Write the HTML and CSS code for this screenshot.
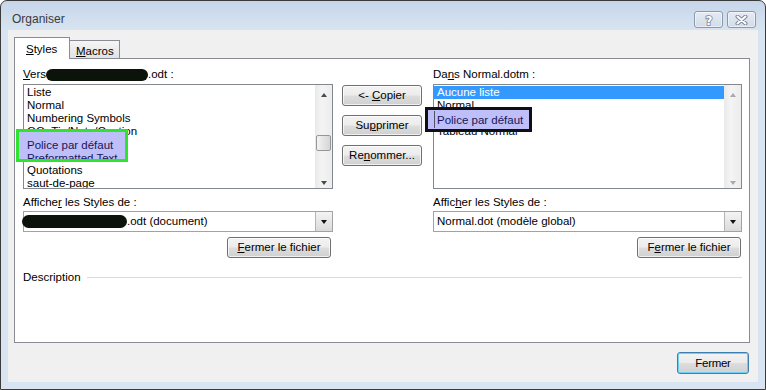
FILE: index.html
```html
<!DOCTYPE html>
<html lang="fr">
<head>
    <meta charset="UTF-8">
    <meta name="viewport" content="width=device-width, initial-scale=1.0">
    <title>Organiser</title>
    <link rel="stylesheet" href="styles.css">
</head>
<body>
    <div class="window">
        <div class="titlebar">
            <span class="title">Organiser</span>
            <div class="caption-btns">
                <span class="cap-btn help">
                    <svg width="12" height="14" viewBox="0 0 12 14">
                        <text x="6" y="12" text-anchor="middle" class="qmark">?</text>
                    </svg>
                </span>
                <span class="cap-btn close">
                    <svg width="13" height="10" viewBox="0 0 13 10">
                        <path d="M2.5 1.5 L10.5 8.5 M10.5 1.5 L2.5 8.5" stroke="#7b8696" stroke-width="4" stroke-linecap="round"/>
                        <path d="M2.5 1.5 L10.5 8.5 M10.5 1.5 L2.5 8.5" stroke="#fff" stroke-width="2" stroke-linecap="round"/>
                    </svg>
                </span>
            </div>
        </div>
        <div class="client">
            <div class="tabs">
                <span class="tab active"><u>S</u>tyles</span>
                <span class="tab"><u>M</u>acros</span>
            </div>
            <div class="panel">
                <div class="cols">
                    <div class="col">
                        <div class="lbl"><u>V</u>ers<span class="redact redact-lbl"></span>.odt :</div>
                        <div class="listbox">
                            <ul class="items">
                                <li>Liste</li>
                                <li>Normal</li>
                                <li>Numbering Symbols</li>
                                <li>OOoTip/Note/Caution</li>
                                <li>Police par défaut</li>
                                <li>Preformatted Text</li>
                                <li>Quotations</li>
                                <li>saut-de-page</li>
                            </ul>
                            <div class="vscroll">
                                <span class="arrow up"></span>
                                <div class="track"><span class="thumb"></span></div>
                                <span class="arrow down"></span>
                            </div>
                            <!-- annotation pasted over the list -->
                            <div class="mark mark-green">
                                <span>Police par défaut</span>
                                <span>Preformatted Text</span>
                            </div>
                        </div>
                        <div class="lbl gap">Affiche<u>r</u> les Styles de :</div>
                        <div class="combo">
                            <span class="combo-text"><span class="redact redact-combo"></span>.odt (document)</span>
                            <span class="drop"><i></i></span>
                        </div>
                        <div class="btn-row"><button class="btn wide"><u>F</u>ermer le fichier</button></div>
                    </div>
                    <div class="mid">
                        <button class="btn">&lt;- <u>C</u>opier</button>
                        <button class="btn">Su<u>p</u>primer</button>
                        <button class="btn">Re<u>n</u>ommer...</button>
                    </div>
                    <div class="col right">
                        <div class="lbl">Da<u>n</u>s Normal.dotm :</div>
                        <div class="listbox">
                            <ul class="items">
                                <li class="sel">Aucune liste</li>
                                <li>Normal</li>
                                <li>Police par défaut</li>
                                <li>Tableau Normal</li>
                            </ul>
                            <div class="vscroll off">
                                <span class="arrow up"></span>
                                <div class="track"></div>
                                <span class="arrow down"></span>
                            </div>
                            <div class="mark mark-black">
                                <span class="edge">Police par défaut</span>
                            </div>
                        </div>
                        <div class="lbl gap">Affic<u>h</u>er les Styles de :</div>
                        <div class="combo">
                            <span class="combo-text pad">Normal.dot (modèle global)</span>
                            <span class="drop"><i></i></span>
                        </div>
                        <div class="btn-row"><button class="btn wide">F<u>e</u>rmer le fichier</button></div>
                    </div>
                </div>
                <div class="desc">Description<span class="rule"></span></div>
            </div>
            <div class="footer">
                <button class="btn default">Fermer</button>
            </div>
        </div>
    </div>
</body>
</html>
```

FILE: styles.css
```css
*{
    padding: 0;
    margin: 0;
    box-sizing: border-box;
}
ul{
    list-style: none;
}
body{
    width: 766px;
    height: 390px;
    overflow: hidden;
    font-family: "Liberation Sans", Arial, sans-serif;
    font-size: 11.5px;
    color: #000;
    background: #fff;
}
u{
    text-decoration: underline;
    text-underline-offset: 1px;
}
.window{
    width: 766px;
    height: 390px;
    border: 1px solid #3b3b3b;
    border-radius: 7px 7px 0 0;
    background: linear-gradient(#c6d6e9, #d8e4f1 30px, #d8e4f1);
    display: flex;
    flex-direction: column;
}
.titlebar{
    height: 29px;
    flex: none;
    display: flex;
    align-items: flex-start;
    padding: 10px 9px 0 11px;
}
.title{
    font-size: 12px;
    line-height: 17px;
    color: #3a3a3a;
}
.caption-btns{
    margin-left: auto;
    display: flex;
    gap: 4px;
}
.cap-btn{
    width: 29px;
    height: 17px;
    border: 1px solid #8b99ae;
    border-radius: 3px;
    background: linear-gradient(#e4ebf4, #d2dce8);
    box-shadow: inset 0 0 0 1px rgba(255,255,255,0.5);
    display: flex;
    align-items: center;
    justify-content: center;
}
.qmark{
    font-family: "DejaVu Sans", sans-serif;
    font-weight: bold;
    font-size: 12px;
    fill: #fff;
    stroke: #7b8696;
    stroke-width: 1.6px;
    paint-order: stroke;
}
.client{
    margin: 0 7px;
    height: 352px;
    flex: none;
    background: #f0f0f0;
    display: flex;
    flex-direction: column;
    padding: 7px 8px 0 6px;
}
.tabs{
    display: flex;
    align-items: flex-end;
}
.tab{
    height: 18px;
    width: 50px;
    padding: 3px 0 0 6px;
    line-height: 15px;
    border: 1px solid #898c95;
    border-left: none;
    border-bottom: none;
    background: linear-gradient(#f5f5f5, #e2e2e2);
}
.tab.active{
    width: 56px;
    height: 22px;
    padding: 4px 0 0 11px;
    border-left: 1px solid #898c95;
    background: #fff;
    margin-bottom: -1px;
    position: relative;
    z-index: 1;
}
.panel{
    width: 736px;
    height: 285px;
    border: 1px solid #898c95;
    background: #fff;
    padding: 8px 7px 0 8px;
}
.cols{
    display: grid;
    grid-template-columns: 310px 100px 309px;
}
.col{
    display: flex;
    flex-direction: column;
}
.lbl{
    height: 15px;
    line-height: 15px;
    white-space: nowrap;
}
.lbl.gap{
    margin-top: 6px;
}
.redact{
    display: inline-block;
    background: #0b130b;
    border-radius: 7px;
    vertical-align: top;
}
.redact-lbl{
    width: 102px;
    height: 12px;
    margin-top: 2px;
}
.redact-combo{
    width: 105px;
    height: 13px;
    margin: 0 0 0 -2px;
}
.listbox{
    position: relative;
    margin-top: 2px;
    height: 105px;
    border: 1px solid #828790;
    display: flex;
    background: #fff;
}
.items{
    flex: 1;
    overflow: hidden;
    padding-top: 1px;
}
.items li{
    line-height: 13px;
    height: 13px;
    padding: 0 0 0 3px;
    white-space: nowrap;
}
.items li.sel{
    background: #3399ff;
    color: #fff;
}
.vscroll{
    width: 17px;
    display: flex;
    flex-direction: column;
    background: linear-gradient(to right, #e9e9e9, #f4f4f4 40%, #ececec);
}
.arrow{
    height: 17px;
    display: flex;
    justify-content: center;
}
.arrow::after{
    content: "";
    width: 0;
    height: 0;
    border-left: 3.5px solid transparent;
    border-right: 3.5px solid transparent;
}
.arrow.up{
    align-items: flex-start;
    padding-top: 8px;
}
.arrow.up::after{
    border-bottom: 4px solid #4a4a4a;
}
.arrow.down{
    align-items: flex-start;
    padding-top: 10px;
}
.arrow.down::after{
    border-top: 4px solid #4a4a4a;
}
.vscroll.off .arrow.up::after{
    border-bottom-color: #a9a9a9;
}
.vscroll.off .arrow.down::after{
    border-top-color: #a9a9a9;
}
.track{
    flex: 1;
}
.thumb{
    display: block;
    width: 15px;
    height: 16px;
    margin: 33px 0 0 1px;
    border: 1px solid #979797;
    border-radius: 2px;
    background: linear-gradient(to right, #f4f4f4, #e4e4e4 50%, #d6d6d6);
}
.mark{
    position: absolute;
    display: flex;
    flex-direction: column;
    overflow: hidden;
    background: #bebef8;
    color: #16165a;
    white-space: nowrap;
    line-height: 13px;
}
.mark-green{
    left: -8px;
    top: 44px;
    width: 112px;
    height: 33px;
    border: 3px solid #2ee42e;
    padding: 7px 0 0 8px;
}
.mark-green span{
    height: 13px;
    flex: none;
}
.mark-black{
    left: -9px;
    top: 22px;
    width: 107px;
    height: 25px;
    border: 3px solid #101010;
    padding: 1px 0 0 6px;
}
.mark-black .edge{
    border-left: 1px solid #52526e;
    padding: 3px 0 1px 2px;
}
.combo{
    margin-top: 1px;
    height: 21px;
    border: 1px solid #a2a2a2;
    display: flex;
    align-items: center;
    background: #fff;
}
.combo-text{
    flex: 1;
    white-space: nowrap;
    line-height: 15px;
    display: flex;
    align-items: center;
}
.combo-text.pad{
    padding-left: 3px;
}
.drop{
    width: 17px;
    height: 19px;
    border-left: 1px solid #b4b4b4;
    background: linear-gradient(#f4f4f4, #dadada);
    display: flex;
    align-items: center;
    justify-content: center;
}
.drop i{
    width: 0;
    height: 0;
    border-left: 3.5px solid transparent;
    border-right: 3.5px solid transparent;
    border-top: 4px solid #111;
}
.btn-row{
    display: flex;
    justify-content: flex-end;
    margin-top: 5px;
    padding-right: 2px;
}
.col.right .btn-row{
    padding-right: 1px;
}
.btn{
    font-family: inherit;
    font-size: 11.5px;
    color: #000;
    width: 80px;
    height: 21px;
    border: 1px solid #707070;
    border-radius: 3px;
    background: linear-gradient(#f3f3f3, #ececec 48%, #dddddd 52%, #d0d0d0);
    box-shadow: inset 0 0 0 1px rgba(255,255,255,0.7);
    line-height: 15px;
    white-space: nowrap;
}
.btn.wide{
    width: 104px;
}
.mid{
    display: flex;
    flex-direction: column;
    gap: 9px;
    padding: 18px 0 0 9px;
}
.desc{
    margin-top: 12px;
    display: flex;
    align-items: center;
    line-height: 15px;
}
.rule{
    flex: 1;
    height: 1px;
    margin-left: 6px;
    background: #d5dbe2;
}
.footer{
    display: flex;
    justify-content: flex-end;
    margin-top: 9px;
    padding-right: 1px;
}
.btn.default{
    width: 72px;
    height: 22px;
    border-color: #3c7fb1;
    box-shadow: inset 0 0 0 1px #6fd0f5;
    letter-spacing: -0.3px;
}
```
